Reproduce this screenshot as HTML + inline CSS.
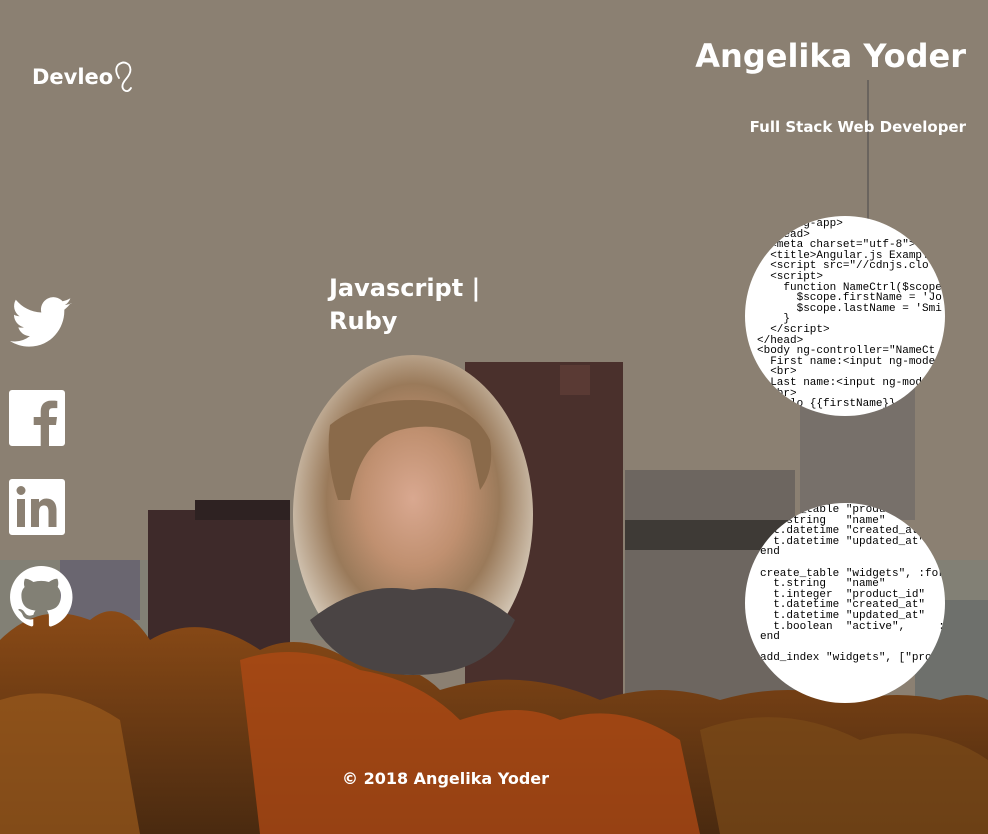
<!DOCTYPE html>
<html><head><meta charset="utf-8"><style>
*{margin:0;padding:0}
body{width:988px;height:834px;overflow:hidden;position:relative;background:#8b8072;font-family:"DejaVu Sans","Liberation Sans",sans-serif;color:#fff}
.t{position:absolute;font-weight:bold;white-space:nowrap}
.code{position:absolute;width:200px;height:200px;border-radius:50%;background:#fff;overflow:hidden}
.code pre{font-family:"Liberation Mono",monospace;font-size:11px;line-height:10.6px;color:#000;position:absolute}
</style></head><body>
<svg width="988" height="834" style="position:absolute;left:0;top:0">
<defs>
<linearGradient id="tr" x1="0" y1="0" x2="0" y2="1"><stop offset="0" stop-color="#8a4a16"/><stop offset="1" stop-color="#4a2a10"/></linearGradient>
<radialGradient id="face" cx="0.5" cy="0.45" r="0.6"><stop offset="0" stop-color="#d9a890"/><stop offset="0.35" stop-color="#c09070"/><stop offset="0.6" stop-color="#9a7a5a"/><stop offset="1" stop-color="#e8e2d6"/></radialGradient>
</defs>
<rect x="0" y="560" width="988" height="80" fill="#7d8078" opacity="0.6"/>
<line x1="868" y1="80" x2="868" y2="400" stroke="#6a645e" stroke-width="2"/>
<rect x="800" y="380" width="115" height="140" fill="#77706a"/>
<rect x="148" y="510" width="142" height="140" fill="#3e2a2a"/>
<rect x="195" y="500" width="95" height="20" fill="#2e2222"/>
<rect x="465" y="362" width="158" height="340" fill="#4a302c"/>
<rect x="560" y="365" width="30" height="30" fill="#5a3a34"/>
<rect x="625" y="470" width="170" height="230" fill="#6d6660"/>
<rect x="625" y="520" width="170" height="30" fill="#3e3a36"/>
<rect x="915" y="600" width="73" height="100" fill="#6e706c"/>
<rect x="60" y="560" width="80" height="60" fill="#6a6670"/>
<path d="M0 640 Q40 600 90 620 Q120 595 150 640 Q200 610 260 650 Q300 630 350 660 Q410 660 440 690 Q520 665 600 700 Q660 680 720 700 Q790 680 850 700 Q900 690 940 700 Q970 690 988 700 L988 834 L0 834 Z" fill="url(#tr)"/>
<path d="M240 660 Q300 640 360 670 Q420 680 460 720 Q520 700 560 720 Q620 700 680 740 L700 834 L260 834 Z" fill="#b04a14" opacity="0.75"/>
<path d="M0 700 Q60 680 120 720 L140 834 L0 834Z" fill="#9a5a1c" opacity="0.7"/>
<path d="M700 730 Q780 700 860 740 Q930 720 988 760 L988 834 L720 834Z" fill="#7a4a18" opacity="0.7"/>
<ellipse cx="413" cy="515" rx="120" ry="160" fill="url(#face)"/>
<path d="M330 425 Q360 400 413 400 Q470 400 490 440 Q495 470 480 490 L470 440 Q440 420 400 430 Q360 440 350 500 L338 500 Q325 460 330 425Z" fill="#8a6a4a"/>
<path d="M310 620 Q360 580 413 590 Q470 580 515 620 Q490 675 413 675 Q340 675 310 620Z" fill="#4a4444"/>
<path d="M119 78 Q114 70 118 65 Q124 60 129 65 Q133 71 126 79 Q120 86 124 90 Q128 93 131 88" fill="none" stroke="#fff" stroke-width="1.8" stroke-linecap="round"/>
<g fill="#fff">
<path d="M72 303c-2.2 1-4.6 1.7-7.1 2 2.6-1.5 4.5-4 5.5-6.8-2.4 1.4-5.1 2.5-7.9 3a12.4 12.4 0 0 0-21.2 11.3C31 312 22 307.2 15.8 299.7a12.4 12.4 0 0 0 3.8 16.6c-2-.1-4-.6-5.6-1.5v.2c0 6 4.3 11 9.9 12.2-1.8.5-3.8.6-5.6.2 1.6 5 6.2 8.6 11.6 8.7A25 25 0 0 1 10 341c5.5 3.5 12 5.6 19 5.6 22.8 0 35.3-18.9 35.3-35.3v-1.6c2.4-1.7 4.5-3.9 6.2-6.4z"/>
<path d="M12 390h50a3 3 0 0 1 3 3v50a3 3 0 0 1-3 3H49v-21h7l1-8h-8v-5c0-2.3.7-3.9 4-3.9h4.3v-7.2c-.8-.1-3.3-.3-6.2-.3-6.2 0-10.4 3.8-10.4 10.7V417h-7v8h7v21H12a3 3 0 0 1-3-3V393a3 3 0 0 1 3-3z"/>
<path d="M12 479h50a3 3 0 0 1 3 3v50a3 3 0 0 1-3 3H12a3 3 0 0 1-3-3v-50a3 3 0 0 1 3-3zm5 20v28h8v-28zm4-13a4.5 4.5 0 1 0 0 9 4.5 4.5 0 0 0 0-9zm10 13v28h8v-15c0-4 1.5-6.5 5-6.5s4.5 2.5 4.5 6.5v15h8v-17c0-7-3.5-11.5-10-11.5-3.5 0-6 1.7-7.5 4v-3.5z"/>
<path d="M41 566a31 31 0 0 0-9.8 60.4c1.5.3 2.1-.7 2.1-1.5v-5.8c-8.6 1.9-10.4-3.7-10.4-3.7-1.4-3.6-3.4-4.5-3.4-4.5-2.8-1.9.2-1.9.2-1.9 3.1.2 4.8 3.2 4.8 3.2 2.8 4.7 7.2 3.4 9 2.6.3-2 1.1-3.4 2-4.2-6.9-.8-14.1-3.4-14.1-15.3 0-3.4 1.2-6.2 3.2-8.3-.3-.8-1.4-3.9.3-8.2 0 0 2.6-.8 8.5 3.2a29 29 0 0 1 15.5 0c5.9-4 8.5-3.2 8.5-3.2 1.7 4.3.6 7.4.3 8.2 2 2.2 3.2 5 3.2 8.3 0 11.9-7.2 14.5-14.1 15.3 1.1 1 2.1 2.9 2.1 5.8v8.6c0 .8.6 1.8 2.1 1.5A31 31 0 0 0 41 566z"/>
</g>
</svg>
<div class="t" style="left:32px;top:65px;font-size:21px;">Devleo</div>
<div class="t" style="right:22px;top:37px;font-size:32px;">Angelika Yoder</div>
<div class="t" style="right:22px;top:118px;font-size:15px;">Full Stack Web Developer</div>
<div class="t" style="left:329px;top:272px;font-size:24px;line-height:33px;">Javascript |<br>Ruby</div>
<div class="code" style="left:745px;top:216px"><pre style="left:12px;top:3px">&lt;html ng-app&gt;
  &lt;head&gt;
  &lt;meta charset="utf-8"&gt;
  &lt;title&gt;Angular.js Example
  &lt;script src="//cdnjs.clo
  &lt;script&gt;
    function NameCtrl($scope
      $scope.firstName = 'Jo
      $scope.lastName = 'Smi
    }
  &lt;/script&gt;
&lt;/head&gt;
&lt;body ng-controller="NameCt
  First name:&lt;input ng-mode
  &lt;br&gt;
  Last name:&lt;input ng-mod
  &lt;br&gt;
  Hello {{firstName}}</pre></div>
<div class="code" style="left:745px;top:503px"><pre style="left:15px;top:2px">create_table "products
  t.string   "name"
  t.datetime "created_at"
  t.datetime "updated_at"
end

create_table "widgets", :force =
  t.string   "name"
  t.integer  "product_id"
  t.datetime "created_at"
  t.datetime "updated_at"
  t.boolean  "active",     :defa
end

add_index "widgets", ["product</pre></div>
<div class="t" style="left:342px;top:769px;font-size:16px;">© 2018 Angelika Yoder</div>
</body></html>
